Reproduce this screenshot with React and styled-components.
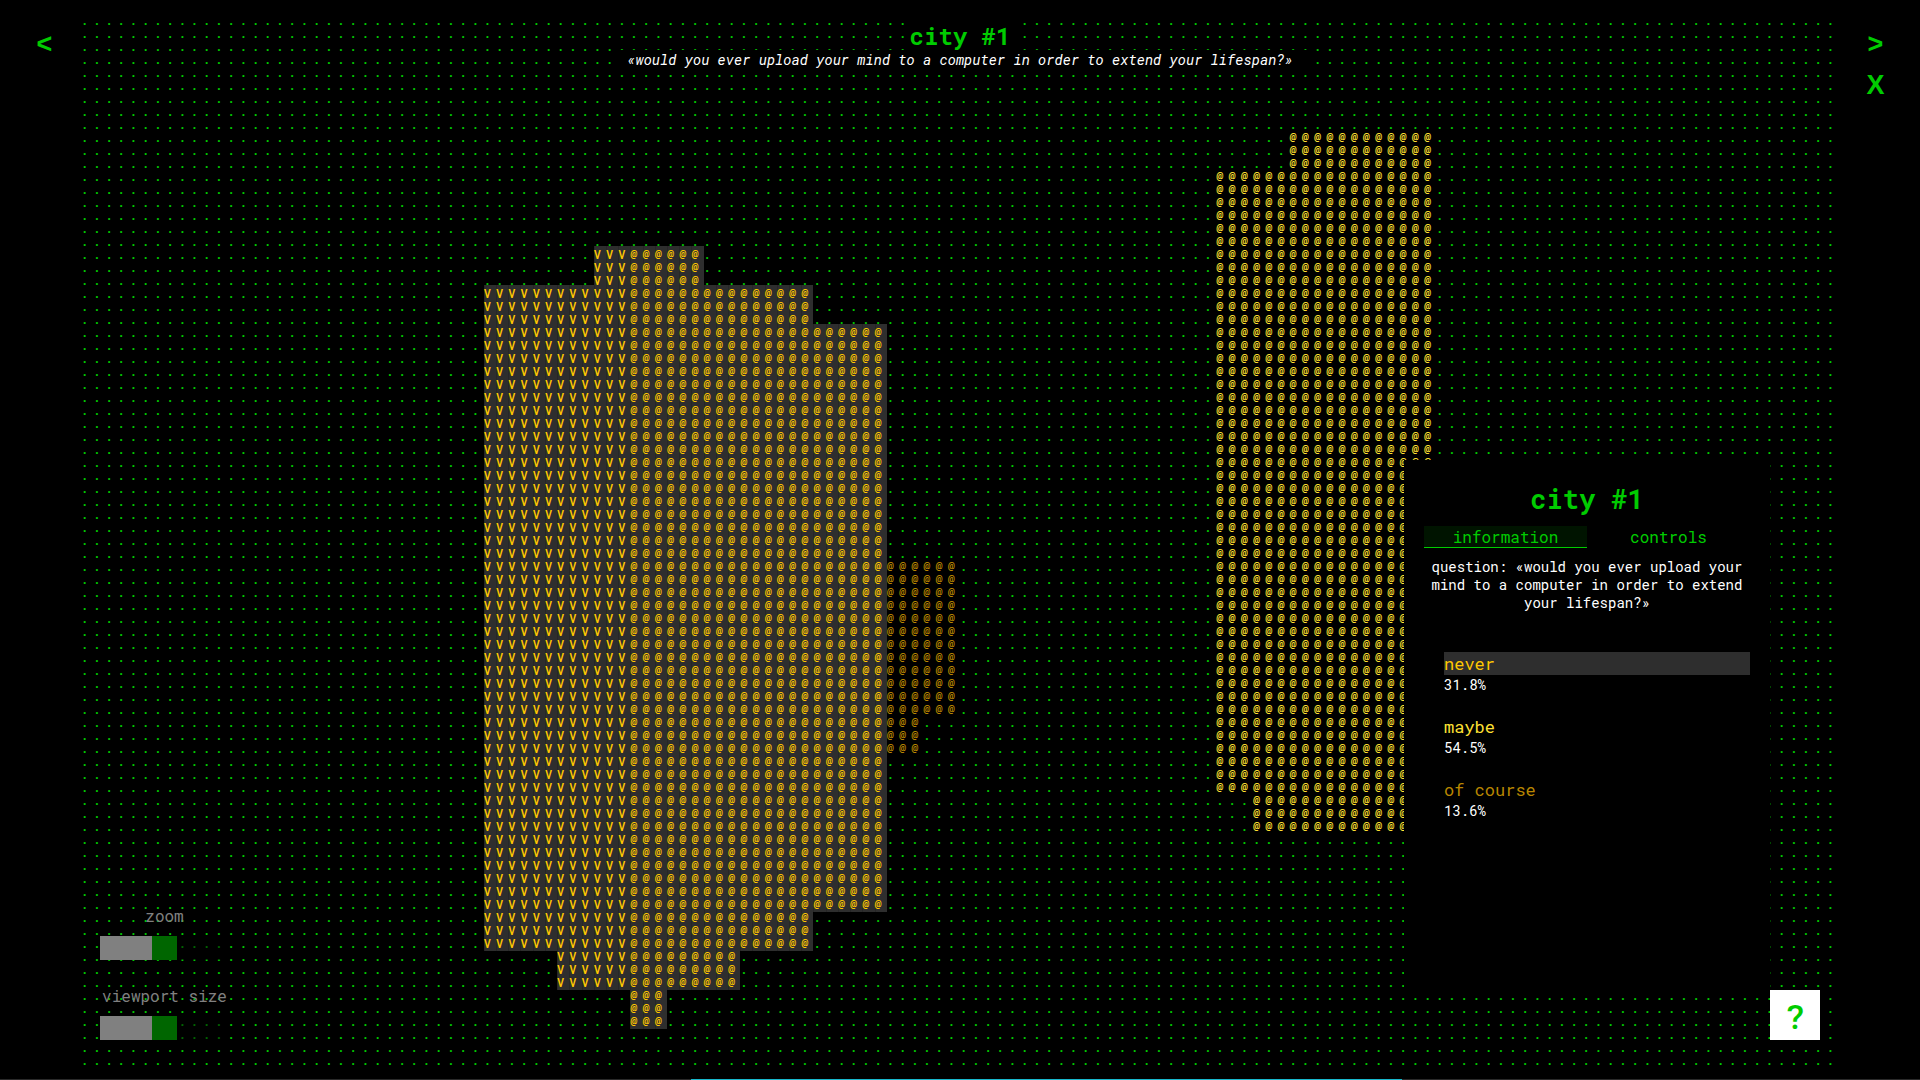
import React, { useState } from "react";
import styled, { createGlobalStyle, css } from "styled-components";

const GREEN = "#00cc00";
const FONT = `"Roboto Mono", "Liberation Mono", "DejaVu Sans Mono", monospace`;
const SANS = `"Liberation Sans", Arial, sans-serif`;

const GlobalStyle = createGlobalStyle`
  *, *::before, *::after { box-sizing: border-box; }
  body {
    margin: 0;
    background: #000;
    color: #fff;
    font-family: ${FONT};
    font-size: 16px;
    overflow: hidden;
  }
  button, input { font: inherit; }
`;

/* ---------- city map ---------- */

const COLS = 144;
const ROWS = 81;

const ANSWERS = {
  never: { name: "never", share: "31.8%", color: "#ffc800" },
  maybe: { name: "maybe", share: "54.5%", color: "#ffe033" },
  course: { name: "of course", share: "13.6%", color: "#b88600" },
};

/* each block: first/last row, first/last column, answer that it stands for */
const BLOCKS = [
  { rows: [18, 20], cols: [42, 50], answer: "never" },
  { rows: [21, 23], cols: [33, 59], answer: "never" },
  { rows: [24, 68], cols: [33, 65], answer: "never" },
  { rows: [69, 71], cols: [33, 59], answer: "never" },
  { rows: [72, 74], cols: [39, 53], answer: "never" },
  { rows: [75, 77], cols: [45, 47], answer: "never" },
  { rows: [42, 53], cols: [66, 71], answer: "course" },
  { rows: [54, 56], cols: [66, 68], answer: "course" },
  { rows: [9, 11], cols: [99, 110], answer: "maybe" },
  { rows: [12, 59], cols: [93, 110], answer: "maybe" },
  { rows: [60, 62], cols: [96, 110], answer: "maybe" },
];
const FIRST_ROOM_COL = 45;

const inside = ([from, to], n) => n >= from && n <= to;

const CELLS = Array.from({ length: COLS * ROWS }, (_, i) => {
  const row = Math.floor(i / COLS);
  const col = i % COLS;
  const block = BLOCKS.find((b) => inside(b.rows, row) && inside(b.cols, col));
  if (!block) return { glyph: "." };
  const glyph = block.answer === "never" && col < FIRST_ROOM_COL ? "V" : "@";
  return { glyph, answer: block.answer };
});

const City = styled.main`
  position: relative;
  height: 100vh;
  overflow: hidden;
`;

const Field = styled.div`
  display: grid;
  grid-template-columns: repeat(${COLS}, minmax(0, 1fr));
  grid-auto-rows: 13px;
  padding: 12px 81px 0;
  font-size: 12px;
  line-height: 16px;
  font-weight: 500;
  color: ${GREEN};
`;

const Cell = styled.span`
  height: 16px;
  ${({ $answer }) => $answer && css`color: ${ANSWERS[$answer].color};`}
  ${({ $lit }) => $lit && css`
    background: #2e2e2e;
    box-shadow: inset 1px 0 #272727;
  `}
`;

const CityMap = React.memo(function CityMap({ selected }) {
  return (
    <Field>
      {CELLS.map(({ glyph, answer }, i) => (
        <Cell key={i} $answer={answer} $lit={!!answer && answer === selected}>{glyph}</Cell>
      ))}
    </Field>
  );
});

/* ---------- overlays ---------- */

const Header = styled.header`
  position: absolute;
  top: 22px;
  left: 0;
  right: 0;
  display: flex;
  flex-direction: column;
  align-items: center;
  pointer-events: none;
`;

const Title = styled.h1`
  margin: 0;
  padding: 0 6px;
  background: #000;
  color: ${GREEN};
  font-size: 24px;
  line-height: 28px;
  font-weight: 700;
`;

const Subtitle = styled.p`
  margin: 0;
  padding: 0 16px;
  background: #000;
  font-size: 14px;
  line-height: 20px;
  font-style: italic;
`;

const NavColumn = styled.nav`
  position: absolute;
  top: 24px;
  ${({ $side }) => $side}: 24px;
  display: flex;
  flex-direction: column;
`;

const NavButton = styled.button`
  width: 41px;
  height: 41px;
  padding: 0;
  border: 0;
  background: none;
  color: ${GREEN};
  font-family: ${SANS};
  font-size: 27px;
  line-height: 41px;
  font-weight: 700;
  cursor: pointer;
`;

const Sliders = styled.div`
  position: absolute;
  left: 100px;
  bottom: 40px;
  width: 129px;
  display: flex;
  flex-direction: column;
  gap: 24px;
`;

const SliderGroup = styled.div`
  display: flex;
  flex-direction: column;
  align-items: center;
  gap: 8px;
`;

const SliderLabel = styled.label`
  color: #808080;
  line-height: 24px;
  white-space: nowrap;
`;

const Slider = styled.input`
  appearance: none;
  width: 100%;
  height: 24px;
  margin: 0;
  background: linear-gradient(to right, #808080 50%, rgba(0, 0, 0, 0.5) 50%);
  &::-webkit-slider-thumb {
    appearance: none;
    width: 25px;
    height: 24px;
    border: 0;
    border-radius: 0;
    background: #006600;
  }
`;

const Panel = styled.aside`
  position: absolute;
  right: 150px;
  bottom: 90px;
  width: 366px;
  height: 530px;
  padding: 20px;
  background: #000;
`;

const PanelTitle = styled.h2`
  margin: 0 0 8px;
  color: ${GREEN};
  font-size: 27px;
  line-height: 38px;
  font-weight: 700;
  text-align: center;
`;

const Tabs = styled.div`
  display: grid;
  grid-template-columns: 1fr 1fr;
`;

const Tab = styled.button`
  height: 22px;
  padding: 0;
  border: 0;
  border-bottom: 1px solid ${({ $active }) => ($active ? GREEN : "transparent")};
  background: ${({ $active }) => ($active ? "#001400" : "transparent")};
  color: ${GREEN};
  font-size: 16px;
  line-height: 21px;
  cursor: pointer;
`;

const Question = styled.p`
  margin: 10px 0 40px;
  font-size: 14px;
  line-height: 18px;
  text-align: center;
`;

const AnswerList = styled.ul`
  display: flex;
  flex-direction: column;
  gap: 21px;
  margin: 0;
  padding: 0 0 0 20px;
  list-style: none;
`;

const AnswerName = styled.button`
  display: block;
  width: 100%;
  height: 23px;
  padding: 0;
  border: 0;
  background: ${({ $lit }) => ($lit ? "#2e2e2e" : "transparent")};
  color: ${({ $color }) => $color};
  font-size: 17px;
  line-height: 23px;
  text-align: left;
  cursor: pointer;
`;

const AnswerShare = styled.span`
  display: block;
  font-size: 14px;
  line-height: 19px;
`;

const HelpButton = styled.button`
  position: absolute;
  right: 100px;
  bottom: 40px;
  width: 50px;
  height: 50px;
  padding: 0;
  border: 0;
  background: #fff;
  color: ${GREEN};
  font-size: 34px;
  line-height: 52px;
  font-weight: 500;
  cursor: pointer;
`;

const BottomEdge = styled.footer`
  position: absolute;
  left: 0;
  right: 0;
  bottom: 0;
  display: grid;
  grid-template-columns: 36% 37% 1fr;
  height: 1px;
  background: #2a2a2a;
  &::before {
    content: "";
    grid-column: 2;
    background: #19b8cc;
  }
`;

const QUESTION = "«would you ever upload your mind to a computer in order to extend your lifespan?»";

export default function App() {
  const [selected, setSelected] = useState("never");
  const [tab, setTab] = useState("information");
  return (
    <>
      <GlobalStyle />
      <City>
        <CityMap selected={selected} />
        <Header>
          <Title>city #1</Title>
          <Subtitle>{QUESTION}</Subtitle>
        </Header>
        <NavColumn $side="left">
          <NavButton type="button">&lt;</NavButton>
        </NavColumn>
        <NavColumn $side="right">
          <NavButton type="button">&gt;</NavButton>
          <NavButton type="button">X</NavButton>
        </NavColumn>
        <Sliders>
          <SliderGroup>
            <SliderLabel htmlFor="zoom">zoom</SliderLabel>
            <Slider id="zoom" type="range" defaultValue={50} />
          </SliderGroup>
          <SliderGroup>
            <SliderLabel htmlFor="viewport">viewport size</SliderLabel>
            <Slider id="viewport" type="range" defaultValue={50} />
          </SliderGroup>
        </Sliders>
        <Panel>
          <PanelTitle>city #1</PanelTitle>
          <Tabs>
            {["information", "controls"].map((name) => (
              <Tab key={name} type="button" $active={tab === name} onClick={() => setTab(name)}>
                {name}
              </Tab>
            ))}
          </Tabs>
          <Question>question: {QUESTION}</Question>
          <AnswerList>
            {Object.entries(ANSWERS).map(([id, { name, share, color }]) => (
              <li key={id}>
                <AnswerName
                  type="button"
                  $color={color}
                  $lit={selected === id}
                  onClick={() => setSelected(id)}
                >
                  {name}
                </AnswerName>
                <AnswerShare>{share}</AnswerShare>
              </li>
            ))}
          </AnswerList>
        </Panel>
        <HelpButton type="button">?</HelpButton>
        <BottomEdge />
      </City>
    </>
  );
}
